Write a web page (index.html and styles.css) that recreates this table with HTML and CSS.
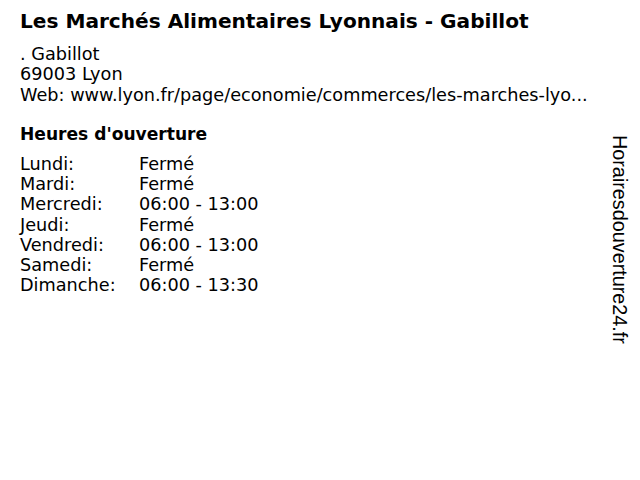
FILE: index.html
```html
<!DOCTYPE html>
<html>
<head>
<meta charset="utf-8">
<link rel="stylesheet" href="styles.css">
</head>
<body>
<div class="page">
  <main class="content">
    <h1 class="title">Les Marchés Alimentaires Lyonnais - Gabillot</h1>
    <div class="address">
      <div>. Gabillot</div>
      <div>69003 Lyon</div>
      <div>Web: www.lyon.fr/page/economie/commerces/les-marches-lyo...</div>
    </div>
    <h2 class="subtitle">Heures d'ouverture</h2>
    <table class="hours">
      <tr><td class="day">Lundi:</td><td>Fermé</td></tr>
      <tr><td class="day">Mardi:</td><td>Fermé</td></tr>
      <tr><td class="day">Mercredi:</td><td>06:00 - 13:00</td></tr>
      <tr><td class="day">Jeudi:</td><td>Fermé</td></tr>
      <tr><td class="day">Vendredi:</td><td>06:00 - 13:00</td></tr>
      <tr><td class="day">Samedi:</td><td>Fermé</td></tr>
      <tr><td class="day">Dimanche:</td><td>06:00 - 13:30</td></tr>
    </table>
  </main>
  <aside class="side"><span class="brand">Horairesdouverture24.fr</span></aside>
</div>
</body>
</html>
```

FILE: styles.css
```css
html, body {
  margin: 0;
  padding: 0;
  background: #fff;
}
body {
  font-family: "DejaVu Sans", Verdana, sans-serif;
  color: #000;
}
.page {
  display: flex;
  width: 640px;
  height: 480px;
}
.content {
  flex: 1;
  padding: 9px 0 0 20px;
}
.title {
  font-size: 20.1px;
  font-weight: bold;
  margin: 0;
  line-height: 24px;
}
.address {
  margin-top: 11px;
  font-size: 17.7px;
  line-height: 20.3px;
}
.subtitle {
  font-size: 17.1px;
  font-weight: bold;
  margin: 19px 0 0;
  line-height: 20px;
}
.hours {
  margin-top: 10px;
  border-collapse: collapse;
  font-size: 17.7px;
  line-height: 20.2px;
}
.hours td {
  padding: 0;
}
.hours .day {
  width: 119px;
}
.side {
  width: 30px;
  display: flex;
  padding-top: 135px;
  padding-left: 5px;
}
.brand {
  writing-mode: vertical-rl;
  font-family: "Liberation Sans", Arial, sans-serif;
  font-size: 19.8px;
  line-height: 20px;
}
```
